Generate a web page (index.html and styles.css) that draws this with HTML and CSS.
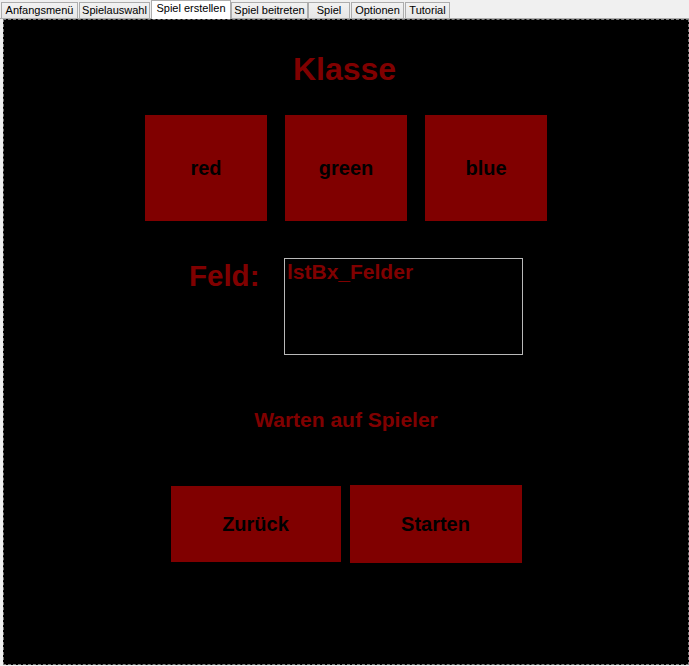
FILE: index.html
```html
<!DOCTYPE html>
<html lang="de">
<head>
<meta charset="utf-8">
<title>Spiel erstellen</title>
<link rel="stylesheet" href="styles.css">
</head>
<body>
<div class="window">
  <div class="tabs">
    <div class="tab t1">Anfangsmenü</div>
    <div class="tab t2">Spielauswahl</div>
    <div class="tab t3 selected">Spiel erstellen</div>
    <div class="tab t4">Spiel beitreten</div>
    <div class="tab t5">Spiel</div>
    <div class="tab t6">Optionen</div>
    <div class="tab t7">Tutorial</div>
  </div>
  <div class="panel">
    <h1 class="title">Klasse</h1>
    <div class="class-row">
      <div class="btn class-btn">red</div>
      <div class="btn class-btn">green</div>
      <div class="btn class-btn">blue</div>
    </div>
    <div class="field-row">
      <div class="field-label">Feld:</div>
      <div class="listbox">lstBx_Felder</div>
    </div>
    <div class="status">Warten auf Spieler</div>
    <div class="action-row">
      <div class="btn back-btn">Zurück</div>
      <div class="btn start-btn">Starten</div>
    </div>
  </div>
</div>
</body>
</html>
```
FILE: styles.css
```css
* { box-sizing: border-box; }
html, body {
  margin: 0;
  padding: 0;
  background: #f0f0f0;
  width: 689px;
  height: 666px;
  overflow: hidden;
}
body {
  font-family: "Liberation Sans", Arial, sans-serif;
}
.window {
  display: flex;
  flex-direction: column;
  height: 666px;
}
.tabs {
  display: flex;
  align-items: flex-end;
  height: 19px;
  border-bottom: 1px solid #adadad;
  background: #f0f0f0;
}
.tab {
  height: 16px;
  border: 1px solid #adadad;
  border-bottom: none;
  background: linear-gradient(#f2f2f2, #e6e6e6);
  font-size: 11px;
  line-height: 14px;
  text-align: center;
  color: #000;
  white-space: nowrap;
  margin-left: 1px;
}
.tab.selected {
  height: 19px;
  margin-bottom: -1px;
  background: #ffffff;
  line-height: 15px;
}
.t1 { width: 77px; }
.t2 { width: 71px; }
.t3 { width: 80px; }
.t4 { width: 77px; margin-left: 0; }
.t5 { width: 42px; margin-left: 0; }
.t6 { width: 53px; }
.t7 { width: 45px; }

.panel {
  margin-left: 3px;
  width: 686px;
  height: 646px;
  background: #000;
  border: 1px dashed #7a7a7a;
  display: flex;
  flex-direction: column;
  align-items: center;
  color: #800000;
  font-weight: bold;
}
.title {
  margin: 31px 0 0;
  padding-right: 3px;
  font-size: 32px;
  line-height: 37px;
  font-weight: bold;
  color: #800000;
}
.btn {
  background: #800000;
  color: #000;
  display: flex;
  align-items: center;
  justify-content: center;
  font-size: 20px;
  font-weight: bold;
}
.class-row {
  margin-top: 27px;
  display: flex;
  gap: 18px;
}
.class-btn {
  width: 122px;
  height: 106px;
}
.field-row {
  margin-top: 37px;
  align-self: flex-start;
  margin-left: 185px;
  display: grid;
  grid-template-columns: 95px 239px;
  align-items: start;
}
.field-label {
  font-size: 29.5px;
  line-height: 35px;
  color: #800000;
}
.listbox {
  height: 97px;
  border: 1px solid #b9b9b9;
  padding: 1px 0 0 2px;
  font-size: 21px;
  line-height: 24px;
  color: #800000;
}
.status {
  margin-top: 53px;
  font-size: 21px;
  line-height: 24px;
}
.action-row {
  margin-top: 53px;
  display: flex;
  align-items: center;
  gap: 9px;
}
.back-btn {
  width: 170px;
  height: 76px;
}
.start-btn {
  width: 172px;
  height: 78px;
}
```
